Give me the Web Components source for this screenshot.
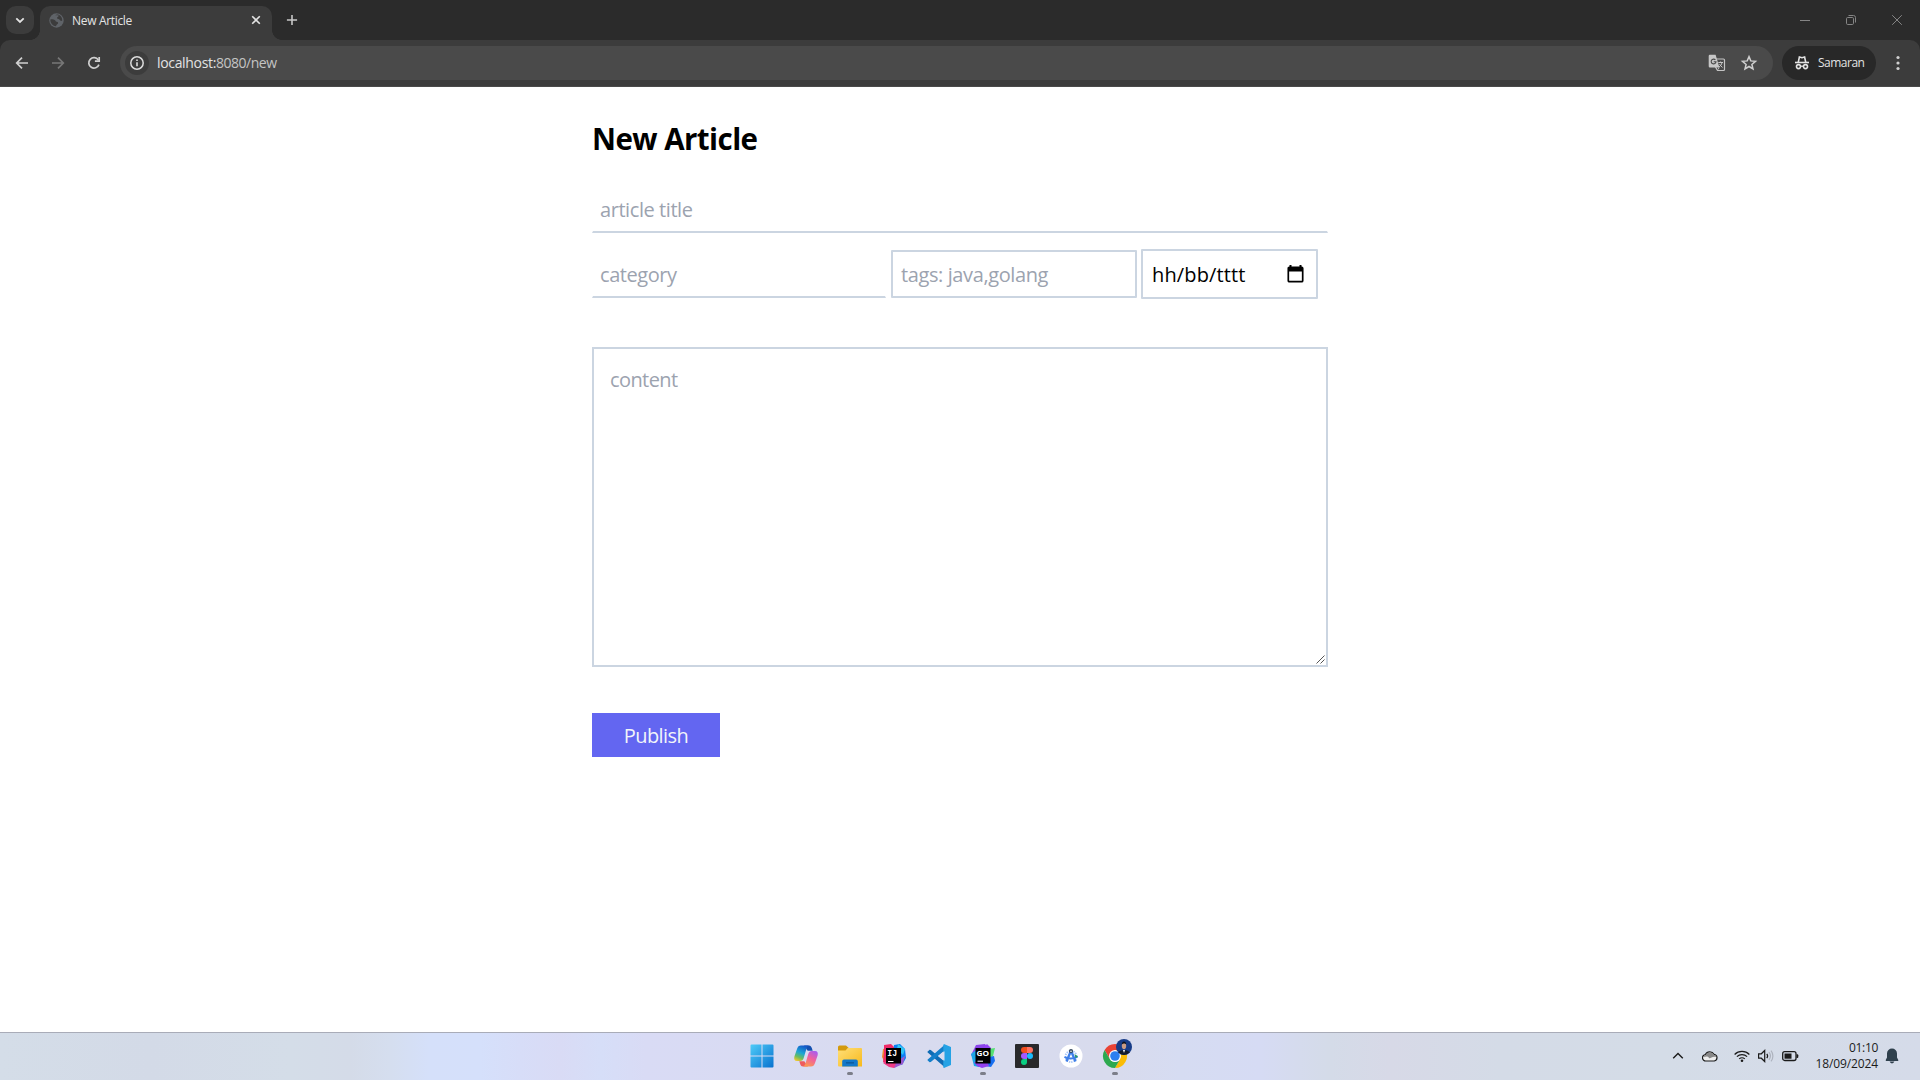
<!DOCTYPE html>
<html lang="id">
<head>
<meta charset="utf-8">
<title>New Article</title>
<style>
html,body{margin:0;height:100%;background:#fff;overflow:hidden}
body{font-family:"Open Sans","Noto Sans",sans-serif}
</style>
</head>
<body>
<app-desktop></app-desktop>
<script>
const define = (name, html) => {
  const template = document.createElement('template');
  template.innerHTML = html;
  customElements.define(name, class extends HTMLElement {
    constructor() {
      super();
      this.attachShadow({ mode: 'open' }).appendChild(template.content.cloneNode(true));
    }
  });
};

/* Text run that tracks its letters to fill the width given in the "w" attribute. */
customElements.define('fit-text', class extends HTMLElement {
  constructor() {
    super();
    this.attachShadow({ mode: 'open' }).innerHTML =
      '<style>:host{display:block;flex:none;white-space:pre}span{display:inline-block}</style><span><slot></slot></span>';
  }
  connectedCallback() {
    const span = this.shadowRoot.querySelector('span');
    const w = Number(this.getAttribute('w'));
    const n = this.textContent.length;
    if (w) {
      this.style.width = w + 'px';
      span.style.letterSpacing = (w - span.getBoundingClientRect().width) / n + 'px';
    }
  }
});

define('tab-strip', `
<style>
:host{display:flex;height:40px;background:#2b2b2b;color:#e3e3e3;font-size:12px;line-height:16px}
svg{display:block;flex:none}
.menu{width:28px;height:28px;margin:6px 6px 0;border-radius:10px;background:#3c3c3c}
.tab{display:flex;align-items:center;box-sizing:border-box;width:232px;height:34px;margin-top:6px;padding:0 10px 6px 9px;background:#3c3c3c;border-radius:10px 10px 0 0;position:relative}
.tab::before,.tab::after{content:"";position:absolute;bottom:0;width:10px;height:10px}
.tab::before{left:-10px;background:radial-gradient(circle at 0 0,#0000 9.6px,#3c3c3c 10.2px)}
.tab::after{right:-10px;background:radial-gradient(circle at 100% 0,#0000 9.6px,#3c3c3c 10.2px)}
fit-text{margin-left:8px;padding-top:2px}
.x{margin-left:auto}
.plus{margin:14px 0 0 14px}
.win{margin-left:auto;margin-right:18px;display:flex;gap:36px;padding-top:15px}
</style>
<svg class="menu" viewBox="0 0 28 28" fill="none" stroke="#e3e3e3" stroke-width="1.8"><path d="M10.3 12.3 14 16l3.700-3.700"/></svg>
<div class="tab">
<svg width="15" height="15" viewBox="0 0 15 15"><circle cx="7.500" cy="7.500" r="7.200" fill="#5f6368"/><path d="M1.300 6.600c1.800-.6 3.300-.3 4.400.3 1.200.6.6 1.700 2 1.800 1.200.1 1.700.7 1.300 1.700-.5 1-1.700 1-2 2.900-3-.1-5.700-2.700-5.700-6.700zM6.300 2.300h3.100c.5 1.100-.2 1.500-1 1.900-.7.400-.6 1.400.4 1.600 1.400.2 2 .9 2.500 1.700.5.700 1.200.4 1.900.3.300-2.500-1-5-3.500-6.100-1.200-.5-2.700-.4-3.400.6z" fill="#3c3c3c"/></svg>
<fit-text w="60">New Article</fit-text>
<svg class="x" width="12" height="12" viewBox="0 0 12 12" stroke="#e3e3e3" stroke-width="1.600"><path d="M2.200 2.200l7.600 7.600M9.800 2.200 2.200 9.800"/></svg>
</div>
<svg class="plus" width="12" height="12" viewBox="0 0 12 12" stroke="#c7c7c7" stroke-width="1.600"><path d="M6 .9v10.200M.9 6h10.200"/></svg>
<div class="win">
<svg width="10" height="10" viewBox="0 0 10 10" stroke="#858585"><path d="M0 5.500h10"/></svg>
<svg width="10" height="10" viewBox="0 0 10 10" fill="none" stroke="#858585"><rect x=".5" y="2.500" width="7" height="7" rx="1.200"/><path d="M2.500.5h5a2 2 0 0 1 2 2v5"/></svg>
<svg width="10" height="10" viewBox="0 0 10 10" stroke="#858585"><path d="M.2.2l9.600 9.600M9.800.2.2 9.800"/></svg>
</div>`);

define('tool-bar', `
<style>
:host{display:block;background:#2b2b2b}
.bar{display:flex;align-items:flex-start;height:47px;box-sizing:border-box;padding:6px 0 0 14px;border-bottom:1px solid #4a4a4a;background:#3c3c3c;border-radius:10px 10px 0 0;color:#e3e3e3}
svg{display:block;flex:none}
.nav{margin:9px 20px 0 0}
.omni{display:flex;align-items:center;box-sizing:border-box;width:1653px;height:34px;margin-left:-2px;padding:0 15px 0 5px;border-radius:17px;background:#4a4a4a;font-size:14px;line-height:20px}
.info{margin-right:8px}
.path{color:#c4c4c4}
.tr{margin-left:auto;margin-right:14px}
.inc{display:flex;align-items:center;box-sizing:border-box;width:94px;height:34px;margin-left:9px;padding-left:12px;border-radius:17px;background:#282828;font-size:12px;line-height:16px}
.inc fit-text{margin-left:8px}
.dots{margin:9px 0 0 14px}
</style>
<div class="bar">
<svg class="nav" width="16" height="16" viewBox="0 0 16 16" fill="none" stroke="#d0d0d0" stroke-width="1.700"><path d="M14 8H3M8 2.700 2.700 8 8 13.300"/></svg>
<svg class="nav" width="16" height="16" viewBox="0 0 16 16" fill="none" stroke="#777" stroke-width="1.700"><path d="M2 8h11M8 2.700 13.300 8 8 13.300"/></svg>
<svg class="nav" width="16" height="16" viewBox="0 0 16 16" fill="none" stroke="#d0d0d0" stroke-width="1.700"><path d="M12.900 9.600A5.200 5.200 0 1 1 12.300 5"/><path d="M13.200 1.900v4.300H8.900"/></svg>
<div class="omni">
<svg class="info" width="24" height="24" viewBox="0 0 24 24"><circle cx="12" cy="12" r="12" fill="#3c3c3c"/><circle cx="12" cy="12" r="6.200" fill="none" stroke="#dcdcdc" stroke-width="1.500"/><path d="M12 11.200v4M12 8.400V10" stroke="#dcdcdc" stroke-width="1.600"/></svg>
<fit-text w="59">localhost:</fit-text><fit-text class="path" w="60.500">8080/new</fit-text>
<svg class="tr" width="18" height="18" viewBox="0 0 18 18"><path d="M7 5h8.500a1 1 0 0 1 1 1v9.500a1 1 0 0 1-1 1H9.500L7 12z" fill="none" stroke="#c4c4c4" stroke-width="1.200"/><path d="M1.900.8h5.700l3.800 12.700H1.900A1.200 1.200 0 0 1 .7 12.300V2A1.200 1.200 0 0 1 1.900.8z" fill="#c7c7c7"/><path d="M7.400 5.900A2.400 2.400 0 1 0 8 7.700H5.700" fill="none" stroke="#4a4a4a" stroke-width="1.100"/><path d="M10.300 8.500H15M12.600 7.500v1M14 8.500c-.4 2-1.600 3.600-3 4.600M11.500 10.200c.8 1.300 1.800 2.300 3 3.200" fill="none" stroke="#c7c7c7" stroke-width="1"/><path d="m10.200 13.800-.6 2.400 2-2.400z" fill="#c7c7c7"/></svg>
<svg width="18" height="18" viewBox="0 0 18 18" fill="none" stroke="#cfcfcf" stroke-width="1.500"><path d="m9 2.600 1.800 4.300 4.700.4-3.600 3.100 1.100 4.600L9 12.500 5 15l1.100-4.600-3.600-3.100 4.700-.4z"/></svg>
</div>
<div class="inc">
<svg width="16" height="16" viewBox="0 0 16 16" fill="none" stroke="#e3e3e3"><path d="M1 7.500h14" stroke-width="1.600"/><path d="M4.300 7.200 5.400 2 8 2.700l2.600-.7 1.100 5.200" stroke-width="1.600"/><circle cx="4.500" cy="11.600" r="2" stroke-width="1.600"/><circle cx="11.500" cy="11.600" r="2" stroke-width="1.600"/><path d="M6.500 11.200h3" stroke-width="1.300"/></svg>
<fit-text w="46.500">Samaran</fit-text>
</div>
<svg class="dots" width="16" height="16" viewBox="0 0 16 16" fill="#d0d0d0"><circle cx="8" cy="2.500" r="1.600"/><circle cx="8" cy="8" r="1.600"/><circle cx="8" cy="13.500" r="1.600"/></svg>
</div>`);

define('form-field', `
<style>
:host{display:flex;align-items:center;box-sizing:border-box;height:48px;border:2px solid #cbd5e1;border-radius:1px;padding:2px 8px 0;color:#9ca3af;font-size:20px;line-height:28px}
:host([underline]){border-color:transparent transparent #cbd5e1;border-width:2px 1px;border-radius:0;padding:2px 7px 0}
:host([date]){height:50px;padding:2px 12px 0 9px;color:#000;justify-content:space-between}
:host([area]){height:320px;align-items:flex-start;justify-content:space-between;padding:17px 0 0 16px;border-radius:0}
</style>
<slot></slot>`);

define('article-form', `
<style>
:host{display:block;width:736px;margin:0 auto;padding-top:34px}
h1{margin:0 0 28px;font-size:29.500px;line-height:36px;font-weight:700;color:#000}
.row{display:flex;align-items:center;margin:16px 0 48px}
.cat{width:294px}.tags{width:246px;margin-left:5px}.date{width:177px;margin-left:4px}
.cal{display:block;margin-bottom:2px}
.grip{align-self:flex-end;display:block;margin:0 1px 1px 0}
button{display:flex;justify-content:center;align-items:center;width:128px;height:44px;margin:46px 0 0;padding:2px 0 0;border:0;background:#6366f1;color:#f1f5f9;font:400 20px/28px "Open Sans","Noto Sans",sans-serif}
</style>
<h1><fit-text w="165.500">New Article</fit-text></h1>
<form-field underline><fit-text w="92.500">article title</fit-text></form-field>
<div class="row">
<form-field underline class="cat"><fit-text w="76.500">category</fit-text></form-field>
<form-field class="tags"><fit-text w="147">tags: java,golang</fit-text></form-field>
<form-field date class="date"><fit-text w="93.500">hh/bb/tttt</fit-text>
<svg class="cal" width="17" height="18" viewBox="0 0 17 18"><path d="M3.500 0v3M13.500 0v3" stroke="#000" stroke-width="2"/><rect x="1.300" y="2.300" width="14.400" height="14.400" rx="1" fill="none" stroke="#000" stroke-width="1.700"/><path d="M1 2h15v4.500H1z"/></svg></form-field>
</div>
<form-field area><fit-text w="67.500">content</fit-text><svg class="grip" width="9" height="9" viewBox="0 0 9 9" stroke="#555" stroke-width="1"><path d="M.5 8.500l8-8M4.500 8.500l4-4"/></svg></form-field>
<button><fit-text w="64.500">Publish</fit-text></button>`);

define('task-icon', `
<style>
:host{display:flex;flex-direction:column;align-items:center;width:24px;height:47px;padding-top:11px;box-sizing:border-box}
::slotted(svg){display:block;flex:none;overflow:visible}
:host([open])::after{content:"";width:6px;height:3px;margin-top:4px;border-radius:1.500px;background:#7c7e89}
</style>
<slot></slot>`);

define('task-bar', `
<style>
:host{display:grid;grid-template-columns:1fr auto 1fr;height:48px;box-sizing:border-box;border-top:1px solid #a9acb8;color:#1b1b1b;
background:linear-gradient(90deg,#d4dde8 0,#d3dae7 150px,#d4dde8 290px,#d4dbe8 350px,#d5deef 390px,#d5e0fa 430px,#d5e0fb 480px,#d7ddf8 520px,#d9dbf5 560px,#d6def8 600px,#d9dbf5 645px,#d8dbef 900px,#d8dbed 1120px,#d6dcf2 1180px,#d6dbf4 1260px,#d4dbe8 1330px,#d7d9e7 1390px,#d4dbe7 1500px,#d4dce7 1660px,#d5dbe9 1920px)}
.apps{grid-column:2;display:flex;gap:20.100px;margin-left:-43px}
.tray{display:flex;align-items:center;justify-content:flex-end;padding:0 21px 2px 0}
.tray svg{display:block;flex:none}
.clock{font-size:12px;line-height:16px;width:64px;display:flex;flex-direction:column;align-items:flex-end;margin:1px 7px 0 15px}
</style>
<div class="apps">
<task-icon><svg width="24" height="24" viewBox="0 0 24 24"><defs><linearGradient id="w" x2="1" y2="1"><stop stop-color="#4fcbf8"/><stop offset="1" stop-color="#0872cf"/></linearGradient></defs><path fill="url(#w)" d="M1.500.5h10v11H.5v-10a1 1 0 0 1 1-1zM12.500.5h10a1 1 0 0 1 1 1v10h-11zM.5 12.500h11v11h-10a1 1 0 0 1-1-1zM12.500 12.500h11v10a1 1 0 0 1-1 1h-10z"/></svg></task-icon>
<task-icon><svg width="24" height="24" viewBox="0 0 24 24"><defs><linearGradient id="a" x1=".6" y1="0" x2=".2" y2="1"><stop stop-color="#1558c8"/><stop offset=".45" stop-color="#1ba5d6"/><stop offset=".75" stop-color="#6cbd5d"/><stop offset="1" stop-color="#f3c62b"/></linearGradient><linearGradient id="b" x1=".8" y1="0" x2=".3" y2="1"><stop stop-color="#a75cf0"/><stop offset=".5" stop-color="#f2619a"/><stop offset="1" stop-color="#fa9a4f"/></linearGradient></defs><path fill="#1450b0" d="M10 1.500h5c1.500 0 2.200 1 2.700 2.300l1 3h-5z"/><path fill="url(#a)" d="M7 1.500h8c-1.500.4-2.100 1.800-2.700 3.700L9.700 14c-.6 2-1.600 3-3.500 3H3c-2.500 0-3.300-2-2.600-4.600L3 5c.8-2.400 1.900-3.500 4-3.500z"/><path fill="#ee5c5c" d="M14 22.500H9c-1.500 0-2.200-1-2.700-2.300l-1-3h5z"/><path fill="url(#b)" d="M17 22.500H9c1.500-.4 2.100-1.800 2.700-3.700L14.300 10c.6-2 1.600-3 3.500-3H21c2.500 0 3.300 2 2.600 4.600L21 19c-.8 2.400-1.900 3.500-4 3.500z"/></svg></task-icon>
<task-icon open><svg width="24" height="24" viewBox="0 0 24 24"><defs><linearGradient id="f" x2="1" y2="1"><stop stop-color="#ffdf78"/><stop offset="1" stop-color="#f7b91c"/></linearGradient></defs><path fill="#d49a0c" d="M1.500 1.500H8l2.500 2.300V8H0V3a1.500 1.500 0 0 1 1.500-1.500z"/><path fill="url(#f)" d="M9.700 4H23a1 1 0 0 1 1 1v17.500H1a1 1 0 0 1-1-1V6.500h7.500z"/><path fill="#1278c9" d="M6 15.500h12a1.800 1.800 0 0 1 1.800 1.800v5.200H4.200v-5.200A1.800 1.800 0 0 1 6 15.500z"/><path fill="#0c5796" d="M8 18.200h8v1.300H8z"/></svg></task-icon>
<task-icon><svg width="24" height="24" viewBox="0 0 24 24"><path fill="#f6882d" d="M0 13 1 5l10-3-2 12-7 3z"/><path fill="#ed2c67" d="M2 1 9 0l4 4-8 16-4-2 1-9z"/><path fill="#0c80f2" d="M12 1l6-1 5 5 1 9-4 7-9-5z"/><path fill="#31c5f4" d="M16 0l7 5-2 6-6-6z"/><path fill="#ef3b85" d="M1 19l7-4 12 4-8 5-5-1z"/><path fill="#9a59d0" d="M12 24l9-4 2-8-8 5z"/><path d="M4 4h15v15.500H4z"/><path fill="#fff" d="M6 17h5.500v1H6z"/><text x="5.300" y="11.800" font-size="8.200" font-weight="700" font-family="Liberation Mono,monospace" fill="#fff">IJ</text></svg></task-icon>
<task-icon><svg width="24" height="24" viewBox="0 0 24 24"><path fill="#0f6cb5" d="M1 7.200 2.600 5.800l1.200.1L18 18v5.500L.7 8.400C.3 8 .5 7.600 1 7.200z"/><path fill="#147fca" d="M1 16.800l1.600 1.400 1.200-.1L18 6V.5L.7 15.600c-.4.400-.2.800.3 1.200z"/><path fill="#25a2e5" d="M17.500.2 24 3v18l-6.500 2.800c-.8.300-1.200-.1-1.200-.8V1c0-.7.500-1 1.200-.8z"/><path fill="#d9dcf0" d="M17.500 7.300v9.400L11.200 12z"/></svg></task-icon>
<task-icon open><svg width="24" height="24" viewBox="0 0 24 24"><path fill="#8b45ea" d="M5 1l9-1 3 4-2 9-11 2-4-4z"/><path fill="#1ba7e8" d="M0 10l5-4 5 9-2 8-5-1z"/><path fill="#54e073" d="M17 5l7-1-2 8-4 3z"/><path fill="#9340f4" d="M16 0l4 4-3 7-7-5z"/><path fill="#176ff1" d="M14 14l9-2 1 5-4 6-6-1z"/><path fill="#9240ee" d="M3 18l13-1 2 5-7 2-5-2z"/><path d="M4.500 4h15v15.500h-15z"/><path fill="#fff" d="M6.500 16.700H12v1H6.500z"/><text x="5.600" y="11.700" font-size="7.800" textLength="12.600" lengthAdjust="spacingAndGlyphs" font-weight="700" font-family="Open Sans,sans-serif" fill="#fff">GO</text></svg></task-icon>
<task-icon><svg width="24" height="24" viewBox="0 0 24 24"><rect width="24" height="24" rx="1" fill="#29292b"/><path fill="#f24e1e" d="M12 3H9a3 3 0 0 0 0 6h3z"/><path fill="#ff7262" d="M12 3h3a3 3 0 0 1 0 6h-3z"/><path fill="#a259ff" d="M12 9H9a3 3 0 0 0 0 6h3z"/><circle cx="15" cy="12" r="3" fill="#1abcfe"/><path fill="#0acf83" d="M12 15H9a3 3 0 1 0 3 3z"/></svg></task-icon>
<task-icon><svg width="24" height="24" viewBox="0 0 24 24"><circle cx="12" cy="12" r="11.500" fill="#fff"/><circle cx="12" cy="12.500" r="5.500" fill="none" stroke="#a9c7f8" stroke-width="2" stroke-dasharray="1.300 1"/><path fill="none" stroke="#3f7fe8" stroke-width="2.400" d="M11.500 8 7.500 17.500M12.500 8l4 9.500"/><path fill="none" stroke="#3f7fe8" stroke-width="2" d="M5.500 13c3.500 2.200 9 2.200 13-.5"/><circle cx="12" cy="7" r="2.100" fill="#34495e"/><circle cx="12" cy="7.300" r=".8" fill="#fff"/><path fill="#2b9b66" d="M15.500 10 19 12.500 16.500 14z"/></svg></task-icon>
<task-icon open><svg width="24" height="24" viewBox="0 0 24 24"><path fill="#e94335" d="M1.600 6A12 12 0 0 1 22.400 6H12l-5.200 9z"/><path fill="#fbbc05" d="M22.400 6A12 12 0 0 1 12 24l5.200-9L12 6z"/><path fill="#2da94f" d="M12 24A12 12 0 0 1 1.600 6l5.200 9a6 6 0 0 0 10.400 0z"/><circle cx="12" cy="12" r="6" fill="#fff"/><circle cx="12" cy="12" r="4.800" fill="#2c7ff0"/><circle cx="21" cy="3" r="8" fill="#173c88"/><path fill="#151d2d" d="M15.300 8.500c1-1.800 2.800-2.300 5.700-2.300s4.700.5 5.700 2.300A8 8 0 0 1 21 11a8 8 0 0 1-5.700-2.500z"/><path fill="#fff" d="m20 6 1 3 1-3z"/><ellipse cx="21" cy="1.800" rx="2.200" ry="3.400" fill="#c99c85"/><path fill="#10131c" d="M18.800.6c-.2-4 4.600-4 4.400 0-.9-1.400-3.500-1.400-4.400 0z"/></svg></task-icon>
</div>
<div class="tray">
<svg width="12" height="12" viewBox="0 0 12 12" fill="none" stroke="#1b1b1b" stroke-width="1.400" style="margin-right:18px"><path d="M1.200 8.300 6 3.500l4.800 4.800"/></svg>
<svg width="16" height="12" viewBox="0 0 16 12" style="margin-right:16px"><path d="M4 11a3.200 3.200 0 0 1-.6-6.400A4.800 4.800 0 0 1 12 4.300 3.400 3.400 0 0 1 12.300 11z" fill="#eee" stroke="#1b1b1b" stroke-width="1.200"/><path d="M3.500 5.300c1-3.500 6.500-4.700 8.300-.2 1.300.1 2.500.8 2.800 2-4-1.600-5.600 1.400-7.400 1.100C5.600 6 4 6.500 2 7.300c0-1 .6-1.800 1.500-2z" fill="#888"/></svg>
<svg width="16" height="12" viewBox="0 0 16 12" fill="none" stroke="#1b1b1b" stroke-width="1.200" style="margin-right:8px"><path d="M.6 4.500a10.500 10.500 0 0 1 14.800 0M2.900 6.700a7.200 7.200 0 0 1 10.200 0M5.200 8.900a4 4 0 0 1 5.600 0"/><circle cx="8" cy="10.700" r="1.300" fill="#1b1b1b" stroke="none"/></svg>
<svg width="16" height="14" viewBox="0 0 16 14" fill="none" stroke="#1b1b1b" stroke-width="1.200" style="margin-right:8px"><path d="M.6 4.800h2.700L6.700 1.500v11L3.300 9.200H.6z"/><path d="M8.800 4.900a3.400 3.400 0 0 1 0 4.200"/><path d="M10.900 3.200a6 6 0 0 1 0 7.600M13 1.600a8.600 8.600 0 0 1 0 10.800" stroke="#aeb3be"/></svg>
<svg width="17" height="12" viewBox="0 0 17 12"><rect x=".7" y="1.700" width="13.300" height="8.800" rx="2" fill="none" stroke="#1b1b1b" stroke-width="1.300"/><rect x="2.500" y="3.500" width="7" height="5.200" fill="#1b1b1b"/><path d="M14.500 4.200h.8a1 1 0 0 1 1 1v1.800a1 1 0 0 1-1 1h-.8z" fill="#1b1b1b"/></svg>
<div class="clock"><fit-text w="29">01:10</fit-text><fit-text w="62.500">18/09/2024</fit-text></div>
<svg width="14" height="16" viewBox="0 0 14 16" fill="#2f404d"><path d="M7 .5a5 5 0 0 1 5 5v4l1.300 2.600c.2.500 0 .9-.5.900H1.200c-.5 0-.7-.4-.5-.9L2 9.500v-4a5 5 0 0 1 5-5zM4.600 13.600h4.800a2.500 2.500 0 0 1-4.800 0z"/></svg>
</div>`);

define('app-desktop', `
<style>
:host{display:flex;flex-direction:column;width:1920px;height:1080px;background:#fff}
main{flex:1;min-height:0}
</style>
<tab-strip></tab-strip>
<tool-bar></tool-bar>
<main><article-form></article-form></main>
<task-bar></task-bar>`);
</script>
</body>
</html>
